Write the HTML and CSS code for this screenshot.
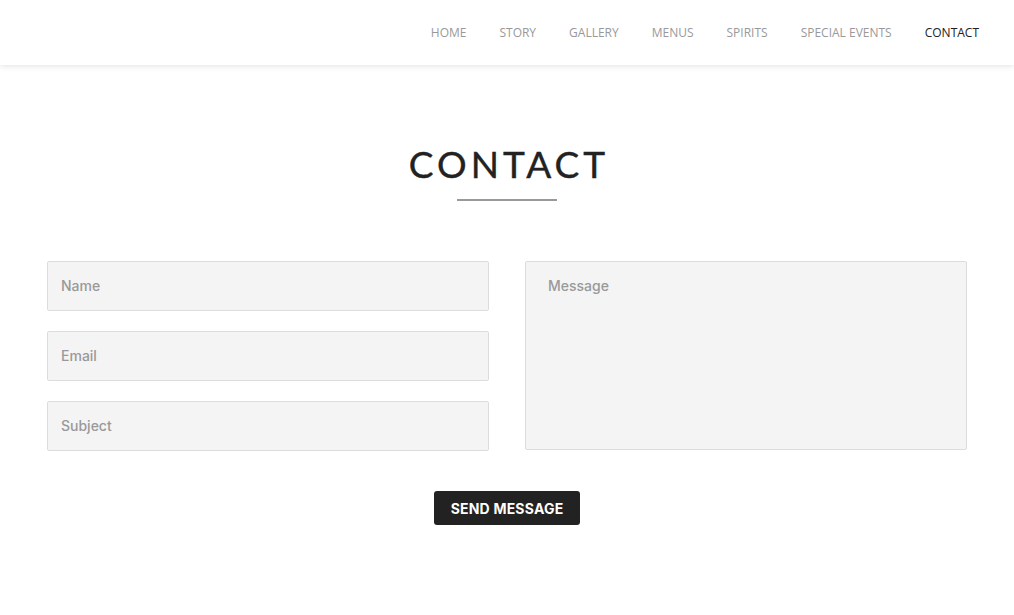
FILE: index.html
```html
<!DOCTYPE html>
<html>
<head>
<meta charset="utf-8">
<link rel="stylesheet" href="styles.css">
</head>
<body>
<header class="topbar">
  <nav class="nav">
    <a href="#" class="nav-link">HOME</a>
    <a href="#" class="nav-link">STORY</a>
    <a href="#" class="nav-link">GALLERY</a>
    <a href="#" class="nav-link">MENUS</a>
    <a href="#" class="nav-link">SPIRITS</a>
    <a href="#" class="nav-link">SPECIAL EVENTS</a>
    <a href="#" class="nav-link active">CONTACT</a>
  </nav>
</header>
<main class="section">
  <h1 class="title">CONTACT</h1>
  <div class="title-rule"></div>
  <form class="form">
    <div class="col">
      <input class="field" type="text" placeholder="Name">
      <input class="field" type="text" placeholder="Email">
      <input class="field" type="text" placeholder="Subject">
    </div>
    <div class="col">
      <textarea class="field area" placeholder="Message"></textarea>
    </div>
    <div class="actions">
      <button type="button" class="btn">SEND MESSAGE</button>
    </div>
  </form>
</main>
</body>
</html>
```
FILE: styles.css
```css
* { box-sizing: border-box; }
html, body { margin: 0; padding: 0; background: #fff; }
body { font-family: "Open Sans", "Liberation Sans", sans-serif; }

.topbar {
  height: 65px;
  background: #fff;
  box-shadow: 0 1px 6px rgba(0,0,0,0.12);
  display: flex;
  justify-content: flex-end;
  align-items: center;
  padding-right: 35px;
  position: relative;
  z-index: 2;
}
.nav { display: flex; gap: 33px; }
.nav-link {
  font-size: 12px;
  color: #999;
  text-decoration: none;
  line-height: 16px;
}
.nav-link.active { color: #222; }

.section { padding-top: 74px; }
.title {
  margin: 0;
  text-align: center;
  font-family: "Lato", sans-serif;
  font-weight: 400;
  font-size: 37px;
  letter-spacing: 4px;
  color: #222;
  line-height: 50px;
  padding-left: 4px;
  -webkit-text-stroke: 0.4px #222;
}
.title-rule {
  width: 100px;
  height: 2px;
  background: #999;
  margin: 10px auto 0;
}
.form {
  width: 920px;
  margin: 60px auto 0;
  display: grid;
  grid-template-columns: 442px 442px;
  column-gap: 36px;
  align-items: start;
}
.col { display: flex; flex-direction: column; gap: 20px; }
.field {
  display: block;
  width: 100%;
  height: 50px;
  background: #f4f4f4;
  border: 1px solid #dcdcdc;
  border-radius: 2px;
  padding: 0 13px 1px;
  font-family: "Inter", sans-serif;
  font-size: 14px;
  font-weight: 500;
  color: #555;
  outline: none;
}
.field::placeholder { color: #999; }
.area {
  height: 189px;
  padding: 15px 22px;
  resize: none;
  line-height: 18px;
}
.actions {
  grid-column: 1 / span 2;
  display: flex;
  justify-content: center;
  padding-top: 40px;
}
.btn {
  background: #222;
  color: #fff;
  border: none;
  border-radius: 3px;
  height: 34px;
  width: 146px;
  font-family: "Inter", sans-serif;
  font-weight: 700;
  font-size: 14px;
  letter-spacing: 0.2px;
  padding: 0;
}
```
